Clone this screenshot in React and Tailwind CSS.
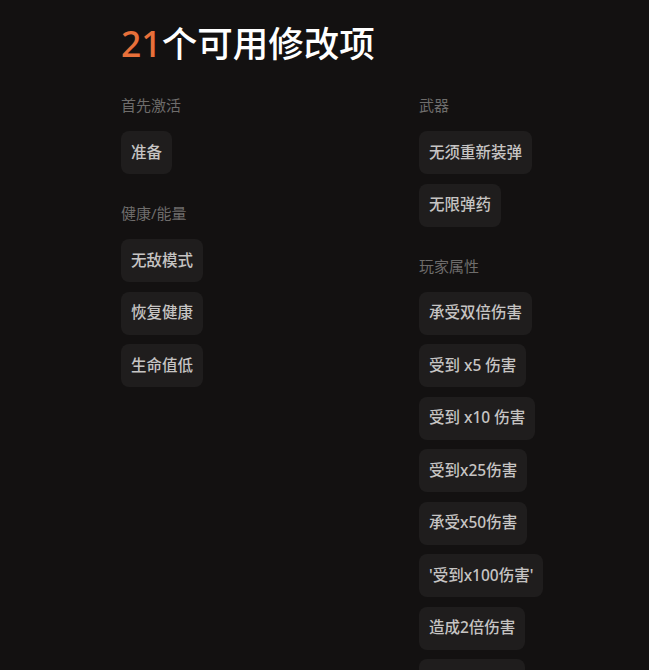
import React from "react";

const sections = {
  left: [
    { title: "首先激活", items: ["准备"] },
    { title: "健康/能量", items: ["无敌模式", "恢复健康", "生命值低"] },
  ],
  right: [
    { title: "武器", items: ["无须重新装弹", "无限弹药"] },
    {
      title: "玩家属性",
      items: [
        "承受双倍伤害",
        "受到 x5 伤害",
        "受到 x10 伤害",
        "受到x25伤害",
        "承受x50伤害",
        "'受到x100伤害'",
        "造成2倍伤害",
        "造成5倍伤害",
      ],
    },
  ],
};

const Section = ({ title, items, first }) => (
  <div className={first ? "" : "mt-[29px]"}>
    <div className="text-[15px] leading-[20px] text-[#6e6c6b] mb-4">{title}</div>
    <div className="flex flex-col items-start gap-[9.5px]">
      {items.map((item, idx) => (
        <div
          key={idx}
          className="h-[43px] px-[10px] flex items-center rounded-lg bg-[#1f1d1d] text-[15.5px] font-medium text-[#c6c4c3] whitespace-nowrap"
        >
          {item}
        </div>
      ))}
    </div>
  </div>
);

const App = () => {
  return (
    <div
      className="w-full h-[670px] overflow-hidden bg-[#131111] pl-[121px] pt-[19px]"
      style={{ fontFamily: '"Noto Sans", "Noto Sans CJK SC", sans-serif' }}
    >
      <h1 className="text-[35.5px] leading-[48px] font-medium text-white">
        <span className="text-[#e8703a]">21</span>个可用修改项
      </h1>
      <div className="grid grid-cols-[298px_1fr] mt-[28px]">
        <div>
          {sections.left.map((s, i) => (
            <Section key={i} title={s.title} items={s.items} first={i === 0} />
          ))}
        </div>
        <div>
          {sections.right.map((s, i) => (
            <Section key={i} title={s.title} items={s.items} first={i === 0} />
          ))}
        </div>
      </div>
    </div>
  );
};

export default App;
